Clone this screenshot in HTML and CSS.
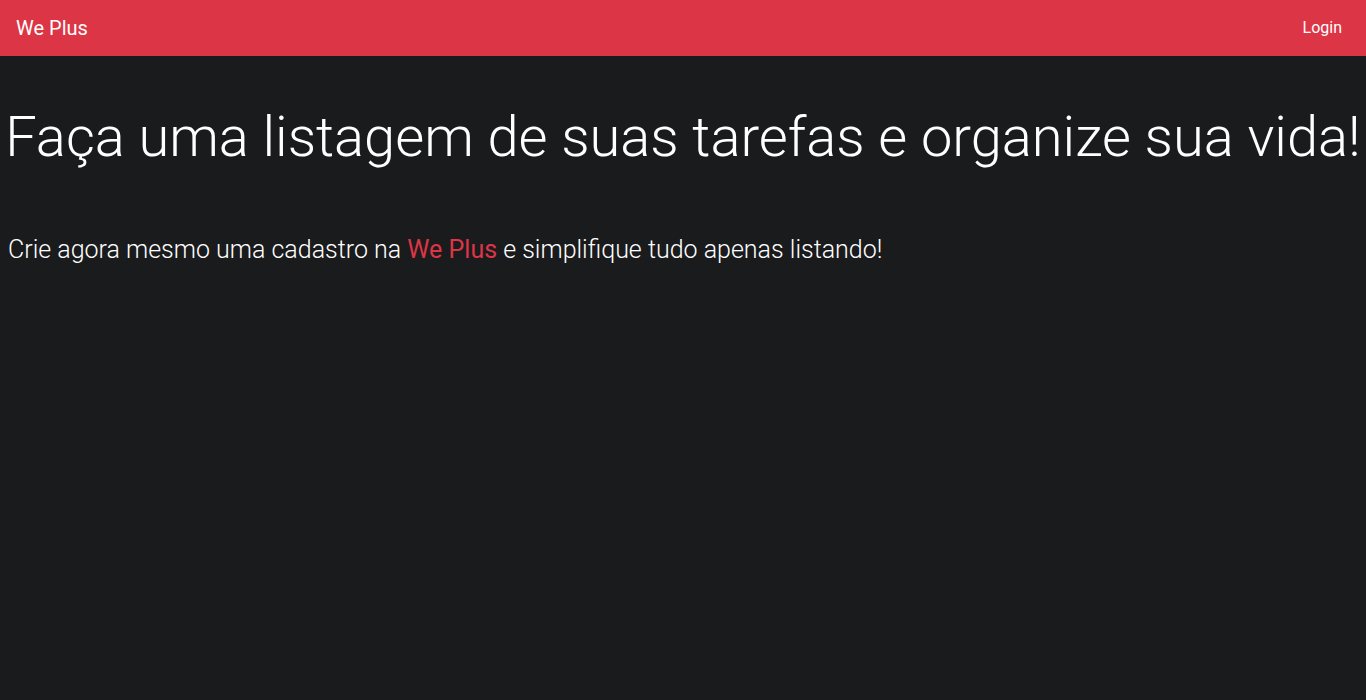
FILE: index.html
```html
<!DOCTYPE html>
<html lang="pt-br">
<head>
<meta charset="utf-8">
<title>We Plus</title>
<link rel="stylesheet" href="styles.css">
</head>
<body>
<nav class="navbar">
  <a class="brand" href="#">We Plus</a>
  <a class="nav-link" href="#">Login</a>
</nav>
<main class="hero">
  <h1 class="display">Faça uma listagem de suas tarefas e organize sua vida!</h1>
  <p class="lead">Crie agora mesmo uma cadastro na <span class="accent">We Plus</span> e simplifique tudo apenas listando!</p>
</main>
</body>
</html>
```
FILE: styles.css
```css
* { box-sizing: border-box; }
html, body { margin: 0; padding: 0; }
body {
  background: #1a1b1d;
  color: #fff;
  font-family: Roboto, "Liberation Sans", sans-serif;
  min-height: 700px;
}
.navbar {
  background: #dc3545;
  height: 56px;
  display: flex;
  align-items: center;
  justify-content: space-between;
  padding: 8px 16px;
}
.brand {
  color: #fff;
  text-decoration: none;
  font-size: 20px;
  line-height: 30px;
}
.nav-link {
  color: #fff;
  text-decoration: none;
  font-size: 16px;
  line-height: 24px;
  padding: 8px;
}
.hero {
  padding: 48px 0 0 0;
}
.display {
  margin: 0;
  font-size: 56px;
  font-weight: 300;
  line-height: 1.2;
  color: #fff;
  text-align: center;
}
.lead {
  margin: 60px 0 0 8px;
  font-size: 25px;
  font-weight: 300;
  line-height: 1.5;
  color: #fff;
}
.accent { color: #dc3545; font-weight: 400; }
```
